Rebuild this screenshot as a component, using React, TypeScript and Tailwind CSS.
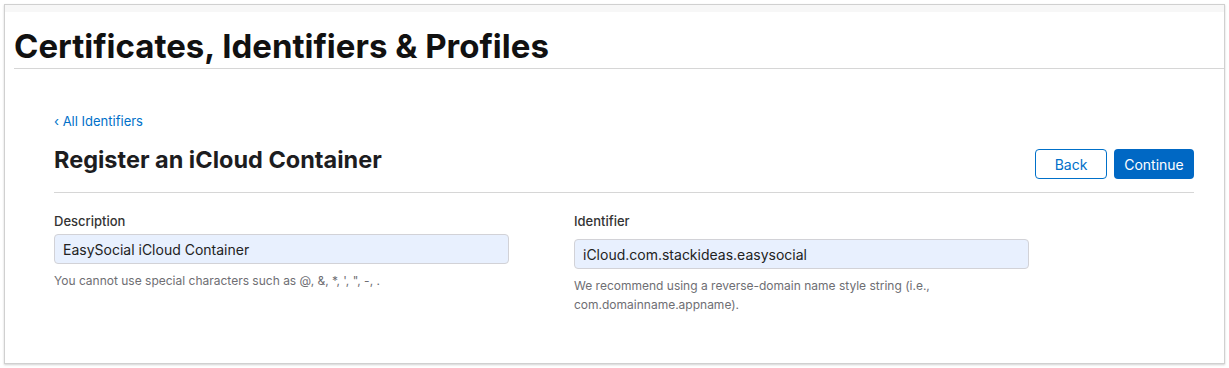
import React from 'react';

const font = { fontFamily: 'Inter, "Noto Sans", sans-serif' };

function Field({
  label,
  value,
  help,
  inputTop
}: {
  label: string;
  value: string;
  help: string;
  inputTop: string;
}) {
  return (
    <div className="w-[520px] shrink-0">
      <div className="text-[13px] leading-4 font-medium text-[#333]">{label}</div>
      <div
        className={`${inputTop} w-[455px] h-[30px] rounded-[4px] border border-[#d2d2d7] bg-[#e8f0fe] px-[8px] flex items-center text-[14px] text-[#222]`}>
        {value}
      </div>
      <p className="mt-[7px] w-[455px] text-[12px] leading-[19px] text-[#6e6e73]">{help}</p>
    </div>);

}

export default function App() {
  return (
    <div className="w-full h-[368px] bg-white p-1" style={font}>
      <div className="h-[360px] border border-[#d0d0d0] bg-white shadow-[0_1px_2px_rgba(0,0,0,0.18)] flex flex-col">
        <div className="h-[7px] bg-[#f7f7f7]" />
        <div className="pt-[14px] ml-[9px] border-b border-[#d6d6d6] pb-[2px]">
          <h1 className="text-[33px] leading-[40px] font-bold text-[#111]">
            Certificates, Identifiers &amp; Profiles
          </h1>
        </div>

        <div className="pl-[49px] pr-[30px] pt-[44px]">
          <a className="block text-[13px] leading-4 text-[#0070c9]">‹ All Identifiers</a>

          <div className="mt-[17px] flex items-start justify-between border-b border-[#d6d6d6] pb-[13px]">
            <h2 className="text-[23.5px] leading-[28px] font-bold text-[#1d1d1f]">Register an iCloud Container</h2>
            <div className="mt-[3px] flex gap-[7px]">
              <button className="w-[72px] h-[30px] rounded-[4px] border border-[#0070c9] bg-white text-[14px] text-[#0070c9]">
                Back
              </button>
              <button className="w-[80px] h-[30px] rounded-[4px] bg-[#0068c4] text-[14px] text-white">
                Continue
              </button>
            </div>
          </div>

          <div className="mt-[20px] flex">
            <Field
              label="Description"
              value="EasySocial iCloud Container"
              help={'You cannot use special characters such as @, &, *, \', ", -, .'}
              inputTop="mt-[5px]" />

            <Field
              label="Identifier"
              value="iCloud.com.stackideas.easysocial"
              help="We recommend using a reverse-domain name style string (i.e., com.domainname.appname)."
              inputTop="mt-[10px]" />

          </div>
        </div>
      </div>
    </div>);

}
